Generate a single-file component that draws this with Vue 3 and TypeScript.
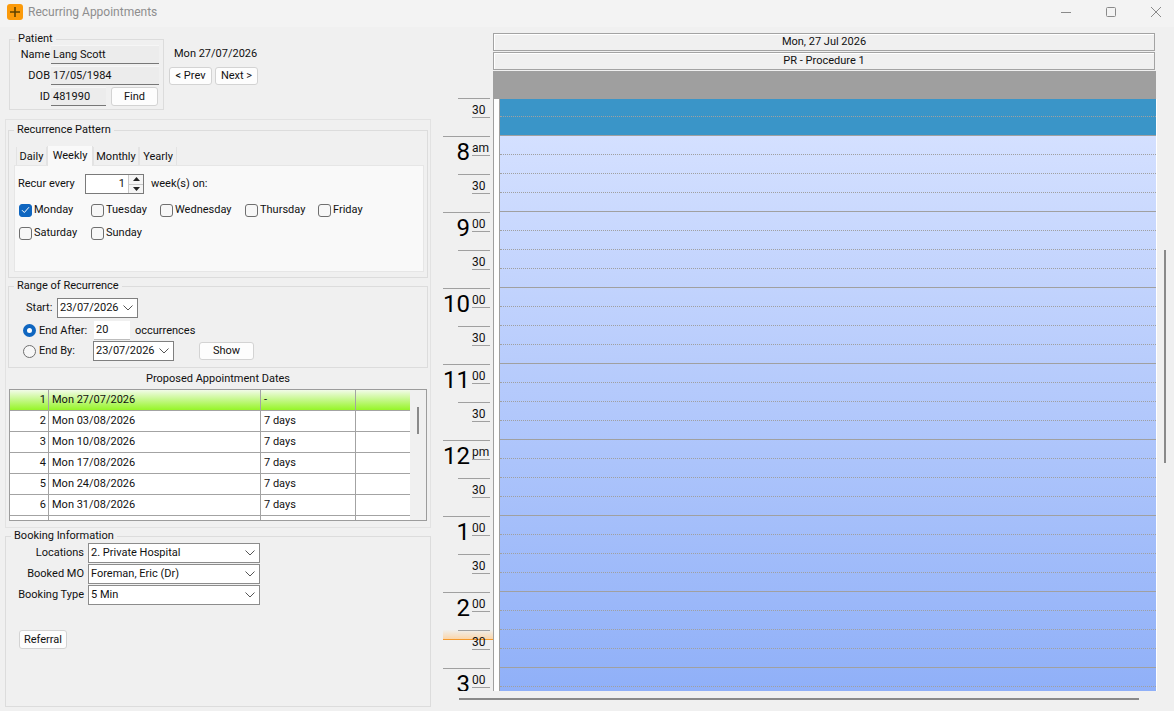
<template>
  <div class="window">
    <header class="titlebar">
      <span class="app-icon">
        <svg width="16" height="16" viewBox="0 0 16 16"><path d="M8 3v10M3 8h10" stroke="#5f4300" stroke-width="1.6" /></svg>
      </span>
      <span class="title">Recurring Appointments</span>
      <div class="win-buttons">
        <svg width="10" height="10" viewBox="0 0 10 10"><path d="M0 5.5h10" stroke="#8a8a8a" /></svg>
        <svg width="10" height="10" viewBox="0 0 10 10"><rect x=".5" y=".5" width="9" height="9" rx="1" fill="none" stroke="#8a8a8a" /></svg>
        <svg width="10" height="10" viewBox="0 0 10 10"><path d="M0 0l10 10M10 0L0 10" stroke="#8a8a8a" /></svg>
      </div>
    </header>

    <main class="content">
      <section class="left">
        <div class="top">
          <fieldset class="group patient">
            <legend>Patient</legend>
            <div class="patient-rows">
              <div class="pt-row">
                <label>Name</label>
                <div class="readonly">Lang Scott</div>
              </div>
              <div class="pt-row">
                <label>DOB</label>
                <div class="readonly">17/05/1984</div>
              </div>
              <div class="pt-row">
                <label>ID</label>
                <div class="readonly short">481990</div>
                <button class="btn find">Find</button>
              </div>
            </div>
          </fieldset>
          <div class="nav">
            <div class="cur-date">Mon 27/07/2026</div>
            <div class="nav-btns">
              <button class="btn nav-btn">&lt; Prev</button>
              <button class="btn nav-btn">Next &gt;</button>
            </div>
          </div>
        </div>

        <div class="outer">
          <fieldset class="group pattern">
            <legend>Recurrence Pattern</legend>
            <div class="tabs">
              <div v-for="t in tabs" :key="t.name" class="tab" :class="{ active: t.name === 'Weekly' }" :style="{ width: t.w + 'px' }">{{ t.name }}</div>
            </div>
            <div class="tab-panel">
              <div class="recur-row">
                <span class="recur-label">Recur every</span>
                <div class="spin">
                  <span class="spin-val">1</span>
                  <div class="spin-btns">
                    <span class="spin-btn"><svg width="7" height="4" viewBox="0 0 7 4"><path d="M3.5 0L7 4H0z" fill="#222" /></svg></span>
                    <span class="spin-btn"><svg width="7" height="4" viewBox="0 0 7 4"><path d="M3.5 4L7 0H0z" fill="#222" /></svg></span>
                  </div>
                </div>
                <span class="weeks">week(s) on:</span>
              </div>
              <div v-for="(row, i) in dayRows" :key="i" class="day-row">
                <div v-for="d in row" :key="d.name" class="day" :style="{ width: d.w + 'px' }">
                  <span class="check" :class="{ on: d.on }">
                    <svg v-if="d.on" width="9" height="8" viewBox="0 0 9 8"><path d="M1 4.2l2.3 2.3L8 1.2" fill="none" stroke="#fff" stroke-width="1" /></svg>
                  </span>
                  <span>{{ d.name }}</span>
                </div>
              </div>
            </div>
          </fieldset>

          <fieldset class="group range">
            <legend>Range of Recurrence</legend>
            <div class="r-row start">
              <span class="start-label">Start:</span>
              <div class="combo date">23/07/2026
                <svg class="chev" width="10" height="6" viewBox="0 0 10 6"><path d="M.5.5L5 5 9.5.5" fill="none" stroke="#555" /></svg>
              </div>
            </div>
            <div class="r-row after">
              <span class="radio on"></span>
              <span class="r-label">End After:</span>
              <div class="occ">20</div>
              <span class="occ-text">occurrences</span>
            </div>
            <div class="r-row by">
              <span class="radio"></span>
              <span class="r-label by-label">End By:</span>
              <div class="combo date">23/07/2026
                <svg class="chev" width="10" height="6" viewBox="0 0 10 6"><path d="M.5.5L5 5 9.5.5" fill="none" stroke="#555" /></svg>
              </div>
              <button class="btn show">Show</button>
            </div>
          </fieldset>

          <div class="proposed-title">Proposed Appointment Dates</div>
          <div class="grid">
            <div v-for="r in dates" :key="r.n" class="g-row" :class="{ first: r.n === 1 }">
              <div class="g-cell num">{{ r.n }}</div>
              <div class="g-cell date-col">{{ r.date }}</div>
              <div class="g-cell gap-col">{{ r.gap }}</div>
              <div class="g-cell end-col"></div>
            </div>
            <div class="g-thumb"></div>
          </div>
        </div>

        <fieldset class="group booking">
          <legend>Booking Information</legend>
          <div v-for="b in booking" :key="b.label" class="b-row">
            <span class="b-label">{{ b.label }}</span>
            <div class="combo wide">{{ b.value }}
              <svg class="chev" width="10" height="6" viewBox="0 0 10 6"><path d="M.5.5L5 5 9.5.5" fill="none" stroke="#555" /></svg>
            </div>
          </div>
          <button class="btn referral">Referral</button>
        </fieldset>
      </section>

      <section class="sched">
        <div class="head-box">Mon, 27 Jul 2026</div>
        <div class="head-box second">PR - Procedure 1</div>
        <div class="gray-bar"></div>
        <div class="sched-body">
          <div class="axis">
            <div class="now"></div>
            <div class="half first-half">
              <div class="half-num">30</div>
            </div>
            <div v-for="h in hours" :key="h.n" class="hour">
              <div class="hour-top">
                <span class="big">{{ h.n }}</span>
                <span class="sup">{{ h.sup }}</span>
              </div>
              <div class="half">
                <div class="half-num">30</div>
              </div>
            </div>
          </div>
          <div class="gutter"></div>
          <div class="day">
            <div class="busy">
              <div class="slot short-slot"></div>
              <div class="slot hour-end"></div>
            </div>
            <div class="free">
              <div v-for="i in 30" :key="i" class="slot" :class="{ 'hour-end': i % 4 === 0 }"></div>
            </div>
          </div>
        </div>
        <div class="h-scroll"></div>
        <div class="v-thumb"></div>
      </section>
    </main>
  </div>
</template>

<script setup lang="ts">
const tabs = [
  { name: 'Daily', w: 31 },
  { name: 'Weekly', w: 46 },
  { name: 'Monthly', w: 46 },
  { name: 'Yearly', w: 38 },
]

const dayRows = [
  [
    { name: 'Monday', w: 72, on: true },
    { name: 'Tuesday', w: 69, on: false },
    { name: 'Wednesday', w: 85, on: false },
    { name: 'Thursday', w: 73, on: false },
    { name: 'Friday', w: 60, on: false },
  ],
  [
    { name: 'Saturday', w: 72, on: false },
    { name: 'Sunday', w: 69, on: false },
  ],
]

const dates = [
  { n: 1, date: 'Mon 27/07/2026', gap: '-' },
  { n: 2, date: 'Mon 03/08/2026', gap: '7 days' },
  { n: 3, date: 'Mon 10/08/2026', gap: '7 days' },
  { n: 4, date: 'Mon 17/08/2026', gap: '7 days' },
  { n: 5, date: 'Mon 24/08/2026', gap: '7 days' },
  { n: 6, date: 'Mon 31/08/2026', gap: '7 days' },
  { n: 7, date: '', gap: '' },
]

const booking = [
  { label: 'Locations', value: '2. Private Hospital' },
  { label: 'Booked MO', value: 'Foreman, Eric (Dr)' },
  { label: 'Booking Type', value: '5 Min' },
]

const hours = [
  { n: '8', sup: 'am' },
  { n: '9', sup: '00' },
  { n: '10', sup: '00' },
  { n: '11', sup: '00' },
  { n: '12', sup: 'pm' },
  { n: '1', sup: '00' },
  { n: '2', sup: '00' },
  { n: '3', sup: '00' },
]
</script>

<style>
html,
body {
  margin: 0;
  overflow: hidden;
  background: #f0f0f0;
}
</style>

<style scoped>
.window {
  width: 1174px;
  height: 711px;
  overflow: hidden;
  background: #f0f0f0;
  color: #111;
  font-family: Roboto, "Liberation Sans", sans-serif;
  font-size: 11px;
  line-height: 14px;
}
* {
  box-sizing: border-box;
}

.titlebar {
  height: 27px;
  display: flex;
  align-items: center;
  background: #f3f3f3;
  padding-left: 7px;
}
.app-icon {
  width: 16px;
  height: 16px;
  margin-top: -3px;
  border-radius: 3px;
  background: #fb9a0a;
  display: block;
}
.app-icon svg {
  display: block;
}
.title {
  margin-left: 5px;
  margin-top: -3px;
  font-size: 12px;
  color: #8e8e8e;
}
.win-buttons {
  margin-left: auto;
  margin-top: -4px;
  padding-right: 13px;
  display: flex;
  gap: 35px;
}

.content {
  display: flex;
  height: 684px;
}
.left {
  width: 426px;
  margin-left: 5px;
  flex: none;
}

.group {
  margin: 0;
  padding: 0;
  min-width: 0;
  border: 1px solid #dcdcdc;
}
legend {
  margin-left: 5px;
  padding: 0 3px;
  line-height: 14px;
}

.top {
  height: 92px;
  padding: 5px 0 0 4px;
  display: flex;
}
.patient {
  width: 155px;
  height: 78px;
}
.patient-rows {
  margin-top: -1px;
  display: flex;
  flex-direction: column;
  gap: 2px;
}
.pt-row {
  display: flex;
  height: 19px;
  align-items: center;
}
.pt-row label {
  width: 40px;
  text-align: right;
  margin-right: 1px;
}
.readonly {
  width: 108px;
  height: 19px;
  padding: 0 2px;
  line-height: 17px;
  background: #ececec;
  border-top: 1px solid #f6f6f6;
  border-bottom: 1px solid #777;
}
.readonly.short {
  width: 55px;
}
.btn {
  display: block;
  padding: 0;
  font: inherit;
  color: #111;
  background: #fdfdfd;
  border: 1px solid #d3d3d3;
  border-radius: 3px;
}
.find {
  width: 47px;
  height: 19px;
  margin-left: 5px;
}
.nav {
  margin-left: 4px;
  padding-top: 15px;
}
.cur-date {
  margin-left: 6px;
  height: 14px;
}
.nav-btns {
  display: flex;
  gap: 3px;
  margin-top: 6px;
  margin-left: 1px;
}
.nav-btn {
  width: 43px;
  height: 18px;
}

.outer {
  height: 409px;
  border: 1px solid #e2e2e2;
}
.pattern {
  width: 420px;
  height: 155px;
  margin: 3px 0 0 2px;
}
.tabs {
  display: flex;
  margin: 9px 0 0 7px;
  height: 19px;
  align-items: flex-end;
}
.tab {
  height: 18px;
  text-align: center;
  line-height: 19px;
  border-left: 1px solid #e3e3e3;
  border-right: 1px solid #e3e3e3;
  background: #f0f0f0;
}
.tab.active {
  height: 20px;
  margin-bottom: -1px;
  line-height: 19px;
  background: #f9f9f9;
  position: relative;
  z-index: 1;
}
.tab-panel {
  width: 410px;
  height: 107px;
  margin-left: 5px;
  padding: 8px 0 0 3px;
  background: #f9f9f9;
  border: 1px solid #e6e6e6;
}
.recur-row {
  display: flex;
  align-items: center;
  height: 20px;
  margin-bottom: 9px;
}
.recur-label {
  width: 67px;
}
.spin {
  width: 59px;
  height: 20px;
  display: flex;
  background: #fff;
  border: 1px solid #7a7a7a;
}
.spin-val {
  flex: 1;
  text-align: right;
  padding-right: 3px;
  line-height: 18px;
}
.spin-btns {
  width: 15px;
  display: flex;
  flex-direction: column;
  border-left: 1px solid #c8c8c8;
}
.spin-btn {
  flex: 1;
  display: flex;
  align-items: center;
  justify-content: center;
  background: #f5f5f5;
  border-bottom: 1px solid #c8c8c8;
}
.spin-btn:last-child {
  border-bottom: 0;
}
.weeks {
  margin-left: 7px;
}
.day-row {
  display: flex;
  height: 23px;
  margin-left: 1px;
}
.day-row .day {
  flex: none;
  display: flex;
  gap: 2px;
  height: 14px;
  align-items: center;
}
.check {
  width: 13px;
  height: 13px;
  flex: none;
  border: 1px solid #6f6f6f;
  border-radius: 3px;
  background: #f7f7f7;
  display: flex;
  align-items: center;
  justify-content: center;
}
.check.on {
  background: #0f66c0;
  border-color: #0f66c0;
}

.range {
  width: 420px;
  height: 89px;
  margin: 1px 0 0 2px;
}
.r-row {
  display: flex;
  align-items: center;
}
.r-row.start {
  margin-top: 5px;
  height: 20px;
  padding-left: 17px;
}
.start-label {
  width: 31px;
}
.r-row.after {
  margin-top: 3px;
  height: 19px;
  padding-left: 14px;
}
.r-row.by {
  margin-top: 1px;
  height: 20px;
  padding-left: 14px;
}
.radio {
  width: 13px;
  height: 13px;
  flex: none;
  border: 1px solid #6f6f6f;
  border-radius: 50%;
  background: #f7f7f7;
}
.radio.on {
  border: 4px solid #0f66c0;
  background: #fff;
}
.r-label {
  width: 55px;
  margin-left: 3px;
  flex: none;
}
.r-label.by-label {
  width: 54px;
}
.occ {
  width: 36px;
  height: 19px;
  padding-left: 2px;
  line-height: 17px;
  background: #fff;
  border-bottom: 1px solid #bdbdbd;
}
.occ-text {
  margin-left: 5px;
}
.combo {
  position: relative;
  height: 20px;
  padding-left: 2px;
  line-height: 18px;
  background: #fff;
  border: 1px solid #7f7f7f;
}
.combo.date {
  width: 81px;
}
.combo.wide {
  width: 172px;
  border-color: #8c8c8c;
}
.chev {
  position: absolute;
  right: 4px;
  top: 6px;
}
.show {
  width: 55px;
  height: 18px;
  margin-left: 25px;
}

.proposed-title {
  margin-top: 4px;
  height: 14px;
  text-align: center;
}
.grid {
  position: relative;
  width: 418px;
  height: 132px;
  margin: 3px 0 0 3px;
  overflow: hidden;
  background: #f0f0f0;
  border: 1px solid #9c9c9c;
}
.g-row {
  display: flex;
  width: 400px;
  height: 21px;
  background: #fff;
  border-bottom: 1px solid #a3a3a3;
}
.g-row.first {
  background: linear-gradient(#f2fbe8, #96f528);
}
.g-cell {
  height: 20px;
  line-height: 20px;
  border-right: 1px solid #a3a3a3;
  padding-left: 3px;
}
.num {
  width: 39px;
  padding: 0 2px 0 0;
  text-align: right;
}
.date-col {
  width: 212px;
}
.gap-col {
  width: 95px;
}
.end-col {
  width: 54px;
  border-right: 0;
}
.g-thumb {
  position: absolute;
  left: 407px;
  top: 17px;
  width: 2px;
  height: 27px;
  background: #8a8a8a;
}

.booking {
  width: 426px;
  height: 178px;
  margin-top: 1px;
}
.b-row {
  display: flex;
  align-items: center;
  height: 20px;
  margin-bottom: 1px;
}
.b-label {
  width: 78px;
  margin-right: 4px;
  text-align: right;
}
.referral {
  width: 48px;
  height: 19px;
  margin: 25px 0 0 13px;
}

.sched {
  position: relative;
  width: 714px;
  margin-left: 12px;
  flex: none;
}
.head-box {
  width: 662px;
  height: 18px;
  margin: 6px 0 0 50px;
  text-align: center;
  line-height: 16px;
  background: #f0f0f0;
  border: 1px solid #a3a3a3;
  box-shadow: inset 1px 1px 0 #fff;
}
.head-box.second {
  margin-top: 1px;
}
.gray-bar {
  width: 663px;
  height: 28px;
  margin: 1px 0 0 50px;
  background: #9f9f9f;
}
.sched-body {
  display: flex;
  height: 592px;
}
.axis {
  position: relative;
  isolation: isolate;
  width: 50px;
  height: 593px;
  margin-top: -1px;
  flex: none;
  overflow: hidden;
}
.now {
  position: absolute;
  z-index: -1;
  left: 0;
  top: 532px;
  width: 50px;
  height: 10px;
  background: linear-gradient(#f0efec, #fbd6aa);
  border-bottom: 1px solid #f59a2c;
}
.hour {
  width: 47px;
  height: 76px;
  border-top: 1px solid #a0a0a0;
}
.hour-top {
  height: 37px;
  display: flex;
  justify-content: flex-end;
}
.big {
  font-size: 24px;
  line-height: 30px;
  margin-right: 2px;
  color: #000;
}
.sup {
  width: 18px;
  height: 19px;
  padding-top: 4px;
  font-size: 12px;
  border-bottom: 1px solid #a0a0a0;
}
.half {
  width: 32px;
  height: 38px;
  margin-left: auto;
  border-top: 1px solid #a0a0a0;
}
.first-half {
  margin-left: 15px;
}
.half-num {
  width: 18px;
  height: 19px;
  margin-left: auto;
  padding-top: 4px;
  font-size: 12px;
  border-bottom: 1px solid #a0a0a0;
}
.gutter {
  width: 7px;
  flex: none;
  background: #fff;
  border-left: 1px solid #a0a0a0;
  border-right: 1px solid #a0a0a0;
}
.sched-body .day {
  width: 657px;
  flex: none;
  overflow: hidden;
  border-right: 1px solid #fff;
}
.busy {
  background: #3a95c8;
}
.free {
  height: 555px;
  overflow: hidden;
  background: linear-gradient(#d4e0ff, #90b0f8);
}
.slot {
  height: 19px;
  border-bottom: 1px dotted #a0a0a0;
}
.short-slot {
  height: 18px;
}
.slot.hour-end {
  border-bottom: 1px solid #a0a0a0;
}
.h-scroll {
  width: 680px;
  height: 2px;
  margin: 0 0 0 16px;
  position: relative;
  top: 7px;
  background: #8a8a8a;
}
.sched-body {
  border-bottom: 0;
}
.v-thumb {
  position: absolute;
  left: 721px;
  top: 223px;
  width: 2px;
  height: 213px;
  background: #8a8a8a;
}
</style>
